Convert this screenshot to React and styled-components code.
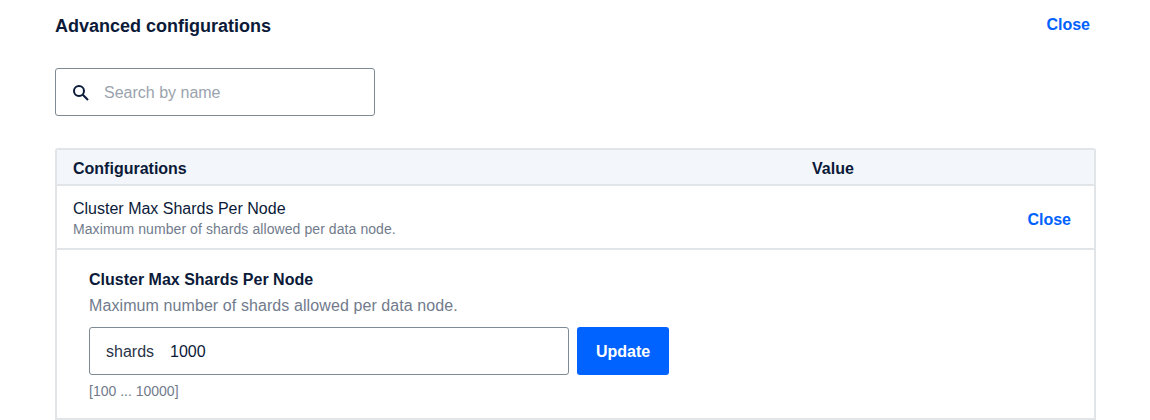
import React from 'react';
import styled, { createGlobalStyle } from 'styled-components';

const GlobalStyle = createGlobalStyle`
  html, body {
    margin: 0;
    padding: 0;
    background: #fff;
    overflow: hidden;
  }
  body {
    font-family: "Liberation Sans", Arial, sans-serif;
    color: #0b1a38;
    -webkit-font-smoothing: antialiased;
  }
`;

const Page = styled.div`
  width: 1150px;
  height: 420px;
  box-sizing: border-box;
  padding: 16px 54px 0 55px;
  overflow: hidden;
`;

const Header = styled.div`
  display: flex;
  justify-content: space-between;
  align-items: flex-start;
  height: 52px;
`;

const Title = styled.h2`
  margin: 0;
  font-size: 18px;
  line-height: 21px;
  font-weight: 700;
`;

const LinkButton = styled.button`
  border: 0;
  background: none;
  padding: 0;
  margin-right: ${(p) => p.$inset || 0}px;
  margin-top: ${(p) => p.$drop || 0}px;
  font: 700 16px/18px "Liberation Sans", Arial, sans-serif;
  color: #0062ff;
  cursor: pointer;
`;

const SearchBox = styled.div`
  display: flex;
  align-items: center;
  gap: 14px;
  width: 320px;
  height: 48px;
  box-sizing: border-box;
  padding: 1px 16px 0;
  border: 1px solid #7e8a94;
  border-radius: 3px;
  font-size: 16px;
  color: #9aa3ad;
`;

const Table = styled.div`
  margin-top: 32px;
  border: 2px solid #e1e5e8;
  border-bottom: 0;
  border-radius: 3px 3px 0 0;
`;

const HeadRow = styled.div`
  display: flex;
  align-items: center;
  height: 36px;
  box-sizing: border-box;
  padding: 4px 16px 0;
  background: #f3f6fb;
  border-bottom: 2px solid #e1e5e8;
  font-size: 16px;
  font-weight: 700;
`;

const HeadName = styled.div`
  width: 739px;
`;

const ConfigRow = styled.div`
  display: flex;
  align-items: center;
  justify-content: space-between;
  height: 64px;
  box-sizing: border-box;
  padding: 3px 7px 0 16px;
  border-bottom: 2px solid #e1e5e8;
`;

const ConfigName = styled.div`
  font-size: 16px;
  line-height: 20px;
`;

const ConfigHint = styled.div`
  margin-top: 2px;
  font-size: 14px;
  line-height: 17px;
  letter-spacing: 0.08px;
  color: #717b8c;
`;

const Panel = styled.div`
  padding: 21px 32px 0;
  height: 170px;
  box-sizing: border-box;
  border-bottom: 2px solid #e1e5e8;
`;

const PanelTitle = styled.div`
  font-size: 16px;
  line-height: 18px;
  font-weight: 700;
`;

const PanelHint = styled.div`
  margin-top: 8px;
  font-size: 16px;
  line-height: 18px;
  letter-spacing: 0.09px;
  color: #717b8c;
`;

const Form = styled.div`
  display: flex;
  gap: 8px;
  margin-top: 12px;
`;

const ValueBox = styled.div`
  display: flex;
  align-items: center;
  gap: 16px;
  width: 480px;
  height: 48px;
  box-sizing: border-box;
  padding: 1px 16px 0;
  border: 1px solid #7e8a94;
  border-radius: 3px;
  font-size: 16px;
`;

const Unit = styled.span`
  color: #2a3448;
`;

const UpdateButton = styled.button`
  width: 92px;
  height: 48px;
  padding: 2px 0 0;
  border: 0;
  border-radius: 3px;
  background: #0062ff;
  color: #fff;
  font: 700 16px "Liberation Sans", Arial, sans-serif;
  cursor: pointer;
`;

const Range = styled.div`
  margin-top: 8px;
  font-size: 14px;
  line-height: 16px;
  color: #717b8c;
`;

const SearchIcon = () => (
  <svg width="18" height="18" viewBox="0 0 18 18" fill="none" stroke="#0b1a38" strokeWidth="2">
    <circle cx="7" cy="7" r="5" />
    <path d="M10.8 10.8 16 16" />
  </svg>
);

export default function App() {
  return (
    <Page>
      <GlobalStyle />
      <Header>
        <Title>Advanced configurations</Title>
        <LinkButton $inset={6}>Close</LinkButton>
      </Header>
      <SearchBox>
        <SearchIcon />
        Search by name
      </SearchBox>
      <Table>
        <HeadRow>
          <HeadName>Configurations</HeadName>
          <div>Value</div>
        </HeadRow>
        <ConfigRow>
          <div>
            <ConfigName>Cluster Max Shards Per Node</ConfigName>
            <ConfigHint>Maximum number of shards allowed per data node.</ConfigHint>
          </div>
          <LinkButton $inset={16} $drop={3}>Close</LinkButton>
        </ConfigRow>
        <Panel>
          <PanelTitle>Cluster Max Shards Per Node</PanelTitle>
          <PanelHint>Maximum number of shards allowed per data node.</PanelHint>
          <Form>
            <ValueBox>
              <Unit>shards</Unit>
              <span>1000</span>
            </ValueBox>
            <UpdateButton>Update</UpdateButton>
          </Form>
          <Range>[100 ... 10000]</Range>
        </Panel>
      </Table>
    </Page>
  );
}
